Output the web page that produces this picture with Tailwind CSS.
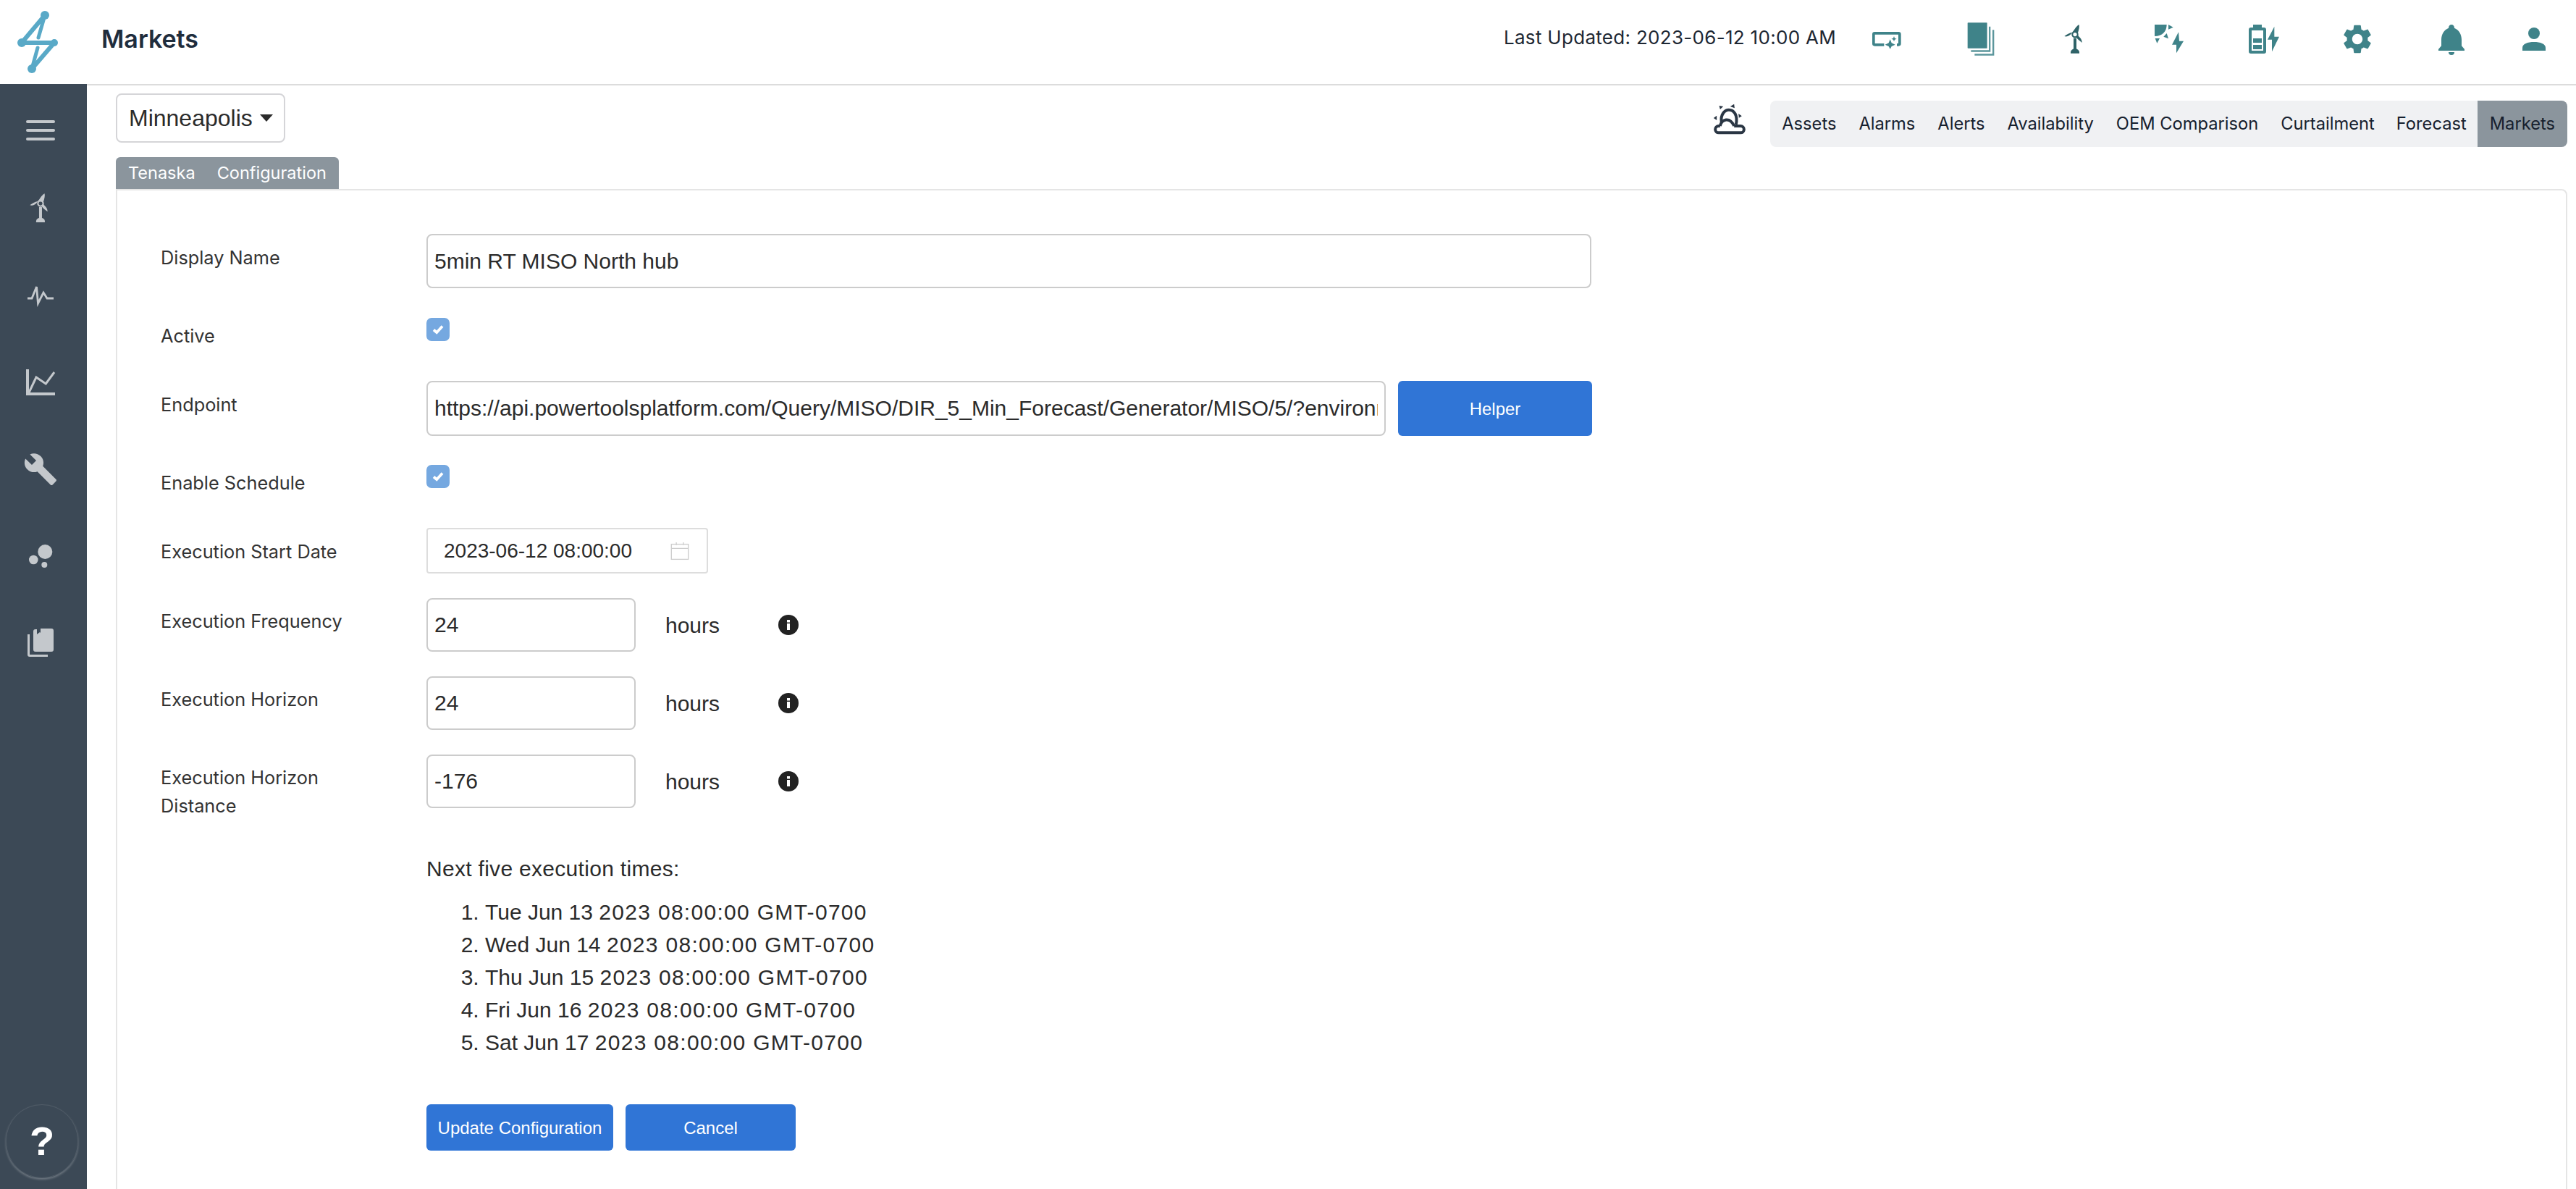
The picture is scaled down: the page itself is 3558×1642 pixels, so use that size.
<!DOCTYPE html>
<html lang="en">
<head>
  <meta charset="UTF-8">
  <title>Markets</title>
  <script src="https://cdn.jsdelivr.net/npm/@tailwindcss/browser@4"></script>
</head>
<body class="font-['Inter',sans-serif] bg-white">
<div class="w-[3558px] h-[1642px] overflow-hidden flex flex-col">

  <!-- top bar -->
  <header class="h-[118px] shrink-0 flex items-start">
    <div class="w-[120px] h-[116px] shrink-0">
      <svg width="120" height="116" viewBox="0 0 120 116" fill="none" stroke="#59a9c7" stroke-linecap="round" stroke-linejoin="round">
        <path d="M62 21 L30 59 H75 L44 95" stroke-width="6"/>
        <path d="M62 21 L53 52 M44 95 L52 66" stroke-width="5"/>
        <circle cx="62" cy="21" r="6" fill="#59a9c7" stroke="none"/>
        <circle cx="30" cy="59" r="6" fill="#59a9c7" stroke="none"/>
        <circle cx="75" cy="59" r="5" fill="#59a9c7" stroke="none"/>
        <circle cx="44" cy="95" r="6" fill="#59a9c7" stroke="none"/>
      </svg>
    </div>
    <div class="flex-1 h-[118px] border-b-2 border-[#dcdcdc] flex items-start">
      <h1 class="ml-[20px] mt-[30px] text-[34px] leading-[48px] font-semibold text-[#1f2d3d]">Markets</h1>
      <div class="ml-auto flex items-start">
        <span class="mt-[36px] mr-[5px] text-[26px] leading-[32px] tracking-[0.3px] text-[#1d2733]">Last Updated: 2023-06-12 10:00 AM</span>
        <svg width="130" height="116" viewBox="-57 -30 390 348" fill="#3f8389">
          <path d="M127 161 H88 a10 10 0 0 1-10-10 V112 a10 10 0 0 1 10-10 H187 a10 10 0 0 1 10 10 V151 a10 10 0 0 1-10 10 H180 V150 H186 V113 H89 V150 H127 Z"/>
          <path d="M152 133 l6 15 15 7-15 7-6 11-6-11-15-7 15-7z"/>
          <path d="M168 120 l3 8 8 3-8 3-3 8-3-8-8-3 8-3z"/>
        </svg>
        <svg width="130" height="116" viewBox="333 -30 390 348" fill="#3f8389">
          <rect x="473" y="64" width="81" height="106" rx="2"/>
          <path d="M561 80 h7 V185 H487 v-7 H561 Z" fill="#5c969c"/>
          <path d="M576 94 h7 V200 H502 v-7 H576 Z" fill="#5c969c"/>
        </svg>
        <svg width="130" height="116" viewBox="723 -30 390 348" fill="#2f6368">
          <path d="M906 104 C916 96 920 80 935 72 C937 84 934 92 930 106 Z"/>
          <path d="M906 106 C896 118 885 124 874 120 C884 112 895 106 906 104 Z"/>
          <path d="M930 116 C936 124 947 130 947 147 C938 140 928 132 922 124 Z"/>
          <path d="M918 99 a14 14 0 1 0 0.01 0 Z M918 105 a8 8 0 1 1-0.01 0 Z" fill-rule="evenodd"/>
          <rect x="912" y="128" width="12" height="50"/>
          <path d="M900 191 v-5 a18 14 0 0 1 36 0 v5 z"/>
        </svg>
        <svg width="130" height="116" viewBox="1113 -30 390 348" fill="#3f8389">
          <path d="M1248 72 H1298 C1298 100 1280 120 1248 120 Z"/>
          <path d="M1305 72 L1325 83 L1305 92 Z"/>
          <path d="M1250 129 H1269 L1258 149 Z"/>
          <path d="M1285 122 L1298 108 L1305 130 Z"/>
          <path d="M1347 103 L1320 155 H1338 V190 L1368 140 H1350 Z"/>
        </svg>
        <svg width="130" height="116" viewBox="9 -30 390 348" fill="#3f8389">
          <path d="M162 72 H198 V84 H207 a9 9 0 0 1 9 9 V183 a9 9 0 0 1-9 9 H153 a9 9 0 0 1-9-9 V93 a9 9 0 0 1 9-9 H162 Z M156 96 V180 H204 V96 Z" fill-rule="evenodd"/>
          <rect x="162" y="129" width="36" height="18"/>
          <rect x="162" y="156" width="36" height="18"/>
          <path d="M250 80 L222 134 H240 V184 L270 122 H250 Z"/>
        </svg>
        <svg width="130" height="116" viewBox="399 -30 390 348" fill="#3f8389">
          <path transform="translate(522 60) scale(6)" d="M19.14 12.94c.04-.3.06-.61.06-.94 0-.32-.02-.64-.07-.94l2.03-1.58c.18-.14.23-.41.12-.61l-1.92-3.32c-.12-.22-.37-.29-.59-.22l-2.39.96c-.5-.38-1.03-.7-1.62-.94l-.36-2.54c-.04-.24-.24-.41-.48-.41h-3.84c-.24 0-.43.17-.47.41l-.36 2.54c-.59.24-1.13.57-1.62.94l-2.39-.96c-.22-.08-.47 0-.59.22L2.74 8.87c-.12.21-.08.47.12.61l2.03 1.58c-.05.3-.09.63-.09.94s.02.64.07.94l-2.03 1.58c-.18.14-.23.41-.12.61l1.92 3.32c.12.22.37.29.59.22l2.39-.96c.5.38 1.03.7 1.62.94l.36 2.54c.05.24.24.41.48.41h3.84c.24 0 .44-.17.47-.41l.36-2.54c.59-.24 1.13-.56 1.62-.94l2.39.96c.22.08.47 0 .59-.22l1.92-3.32c.12-.22.07-.47-.12-.61l-2.01-1.58zM12 15.6c-1.98 0-3.6-1.62-3.6-3.6s1.62-3.6 3.6-3.6 3.6 1.62 3.6 3.6-1.62 3.6-3.6 3.6z"/>
        </svg>
        <svg width="130" height="116" viewBox="789 -30 390 348" fill="#3f8389">
          <path d="M972 86 a12 14 0 0 1 24 0 C1015 94 1026 112 1026 135 V160 L1038 174 V180 H930 V174 L942 160 V135 C942 112 953 94 972 86 Z"/>
          <path d="M972 186 H996 a12 12 0 0 1-24 0 Z"/>
        </svg>
        <svg width="107" height="116" viewBox="1179 -30 321 348" fill="#3f8389">
          <circle cx="1326" cy="108" r="24"/>
          <path d="M1278 180 V168 C1278 152 1300 144 1326 144 C1352 144 1374 152 1374 168 V180 Z"/>
        </svg>
      </div>
    </div>
  </header>

  <div class="flex-1 flex min-h-0 -mt-[2px]">
    <!-- side menu -->
    <aside class="w-[120px] shrink-0 bg-[#3c4956] flex flex-col">
      <svg width="120" height="112" viewBox="0 116 120 112" fill="#c4c8cc">
        <rect x="36" y="166" width="40" height="4" rx="2"/>
        <rect x="36" y="178" width="40" height="4" rx="2"/>
        <rect x="36" y="190" width="40" height="4" rx="2"/>
      </svg>
      <svg width="120" height="120" viewBox="0 228 120 120" fill="#c4c8cc">
        <g transform="translate(-250 243.3) scale(.3333)">
          <path d="M906 104 C916 96 920 80 935 72 C937 84 934 92 930 106 Z"/>
          <path d="M906 106 C896 118 885 124 874 120 C884 112 895 106 906 104 Z"/>
          <path d="M930 116 C936 124 947 130 947 147 C938 140 928 132 922 124 Z"/>
          <path d="M918 99 a14 14 0 1 0 0.01 0 Z M918 105 a8 8 0 1 1-0.01 0 Z" fill-rule="evenodd"/>
          <rect x="912" y="128" width="12" height="50"/>
          <path d="M900 191 v-5 a18 14 0 0 1 36 0 v5 z"/>
        </g>
      </svg>
      <svg width="120" height="120" viewBox="0 348 120 120" fill="none" stroke="#c4c8cc" stroke-width="2.8">
        <polyline points="38,412 44,412 50.5,396 52.5,419 60,404 65,412 74,412"/>
      </svg>
      <svg width="120" height="120" viewBox="0 468 120 120" fill="#c4c8cc">
        <path d="M36 510 h4 V542 H76 v4 H36 Z"/>
        <polyline points="40,542 50,521 63.3,530 75,514" fill="none" stroke="#c4c8cc" stroke-width="3"/>
      </svg>
      <svg width="120" height="120" viewBox="0 588 120 120" fill="#c4c8cc">
        <path transform="translate(32 624) scale(2)" d="M22.7 19l-9.1-9.1c.9-2.3.4-5-1.5-6.9-2-2-5-2.4-7.4-1.3L9 6 6 9 1.6 4.7C.4 7.1.9 10.1 2.9 12.1c1.9 1.9 4.6 2.4 6.9 1.5l9.1 9.1c.4.4 1 .4 1.4 0l2.3-2.3c.5-.4.5-1.1.1-1.4z"/>
      </svg>
      <svg width="120" height="120" viewBox="0 708 120 120" fill="#c4c8cc">
        <circle cx="62.3" cy="762" r="10"/>
        <circle cx="46.3" cy="773" r="6.3"/>
        <circle cx="61.3" cy="780" r="4"/>
      </svg>
      <svg width="120" height="120" viewBox="0 828 120 120" fill="#c4c8cc">
        <path d="M38 876 h3 V904 H66 v3 H41 a3 3 0 0 1-3-3 Z"/>
        <path d="M46 872 a3 3 0 0 1 3-3 h2 V876 l4-3 1 1 V868 H71 a3 3 0 0 1 3 3 V897 a3 3 0 0 1-3 3 H49 a3 3 0 0 1-3-3 Z"/>
      </svg>
      <div class="mt-auto mb-[15px] ml-[8px] w-[100px] h-[102px] rounded-full border border-white/10 shadow-[0_2px_3px_rgba(255,255,255,0.25)] flex items-center justify-center">
        <span class="font-['Liberation_Sans',sans-serif] font-bold text-[56px] leading-none text-white">?</span>
      </div>
    </aside>

    <main class="flex-1 min-w-0 pl-[40px] pr-[12px] flex flex-col">
      <div class="flex items-start pt-[13px]">
        <button class="w-[234px] h-[68px] border-2 border-[#d5d5d8] rounded-[8px] pl-[16px] flex items-center font-['Liberation_Sans',sans-serif] text-[32px] text-[#2b2b2b]">
          Minneapolis
          <svg class="ml-[10px]" width="18" height="10" viewBox="0 0 18 10" fill="#2b2b2b"><path d="M0 0 H18 L9 10 Z"/></svg>
        </button>
        <div class="ml-auto flex items-start mt-[10px]">
          <svg class="mr-[33px] mt-[3px]" width="47" height="45" viewBox="80 70 140 135" fill="#2a3644">
            <path d="M108 82 L125 85 L112 97 Z M154 85 L170 75 L172 92 Z M188 115 L202 125 L190 132 Z M85 133 L98 123 L98 142 Z"/>
            <g fill="none" stroke="#2a3644" stroke-width="12">
              <path d="M118 152 C112 118 132 99 148 99 C170 99 186 122 178 160"/>
              <path d="M112 166 C118 138 152 126 170 166"/>
              <path d="M112 166 H106 a14 14 0 0 0 0 28 H197 a14 14 0 0 0 0-28 H170"/>
            </g>
          </svg>
          <nav class="flex h-[64px] bg-[#f0f1f3] rounded-[8px] overflow-hidden text-[23.7px] text-[#16202e]">
            <a class="px-[16px] flex items-center">Assets</a>
            <a class="px-[15px] flex items-center">Alarms</a>
            <a class="px-[16px] flex items-center">Alerts</a>
            <a class="px-[15px] flex items-center">Availability</a>
            <a class="px-[16px] flex items-center">OEM Comparison</a>
            <a class="px-[15px] flex items-center">Curtailment</a>
            <a class="px-[15px] flex items-center">Forecast</a>
            <a class="px-[17px] flex items-center bg-[#8b959d]">Markets</a>
          </nav>
        </div>
      </div>

      <div class="mt-[14px] flex">
        <div class="h-[44px] w-[308px] bg-[#8b959d] rounded-t-[6px] pl-[17px] flex items-center gap-[30px] text-[23.5px] text-white">
          <span>Tenaska</span>
          <span>Configuration</span>
        </div>
      </div>

      <!-- config form -->
      <section class="flex-none h-[1500px] border-2 border-[#e5e5e5] rounded-tr-[8px] pl-[60px] pt-[60px] text-[25.3px] leading-[39px] text-[#333] font-normal">
        <div class="flex items-start">
          <label class="w-[367px] pt-[13px]">Display Name</label>
          <input class="w-[1609px] h-[75px] border-2 border-[#cccccc] rounded-[8px] px-[9px] font-['Liberation_Sans',sans-serif] text-[30px] text-[#2b2b2b]" value="5min RT MISO North hub">
        </div>
        <div class="flex items-start mt-[41px]">
          <label class="w-[367px] pt-[5px]">Active</label>
          <span class="w-[32px] h-[32px] rounded-[7px] bg-[#75a8e0] flex items-center justify-center">
            <svg width="16" height="14" viewBox="0 0 16 14" fill="none" stroke="#fff" stroke-width="3.8"><path d="M2 7.5 L6.2 11.2 L14 2.5"/></svg>
          </span>
        </div>
        <div class="flex items-start mt-[43px]">
          <label class="w-[367px] pt-[13px]">Endpoint</label>
          <input class="w-[1325px] h-[76px] border-2 border-[#cccccc] rounded-[8px] px-[9px] font-['Liberation_Sans',sans-serif] text-[30px] text-[#2b2b2b]" value="https://api.powertoolsplatform.com/Query/MISO/DIR_5_Min_Forecast/Generator/MISO/5/?environment=production">
          <button class="ml-[17px] w-[268px] h-[76px] rounded-[6px] bg-[#3075d6] text-white font-['Liberation_Sans',sans-serif] text-[24px]">Helper</button>
        </div>
        <div class="flex items-start mt-[40px]">
          <label class="w-[367px] pt-[5px]">Enable Schedule</label>
          <span class="w-[32px] h-[32px] rounded-[7px] bg-[#75a8e0] flex items-center justify-center">
            <svg width="16" height="14" viewBox="0 0 16 14" fill="none" stroke="#fff" stroke-width="3.8"><path d="M2 7.5 L6.2 11.2 L14 2.5"/></svg>
          </span>
        </div>
        <div class="flex items-start mt-[43px]">
          <label class="w-[367px] pt-[13px]">Execution Start Date</label>
          <div class="w-[389px] h-[63px] border-2 border-[#dddddd] rounded-[4px] pl-[22px] pr-[23px] flex items-center justify-between font-['Liberation_Sans',sans-serif] text-[28px] text-[#2b2b2b]">
            <span>2023-06-12 08:00:00</span>
            <svg width="28" height="28" viewBox="1070 80 86 86" fill="none" stroke="#cccccc" stroke-width="4">
              <rect x="1077" y="94" width="72" height="64"/>
              <path d="M1077 112 H1149 M1098 86 V98 M1128 86 V98"/>
            </svg>
          </div>
        </div>
        <div class="flex items-center mt-[34px] h-[74px]">
          <label class="w-[367px] self-start pt-[12px]">Execution Frequency</label>
          <input class="w-[289px] h-[74px] border-2 border-[#cccccc] rounded-[8px] px-[9px] font-['Liberation_Sans',sans-serif] text-[30px] text-[#2b2b2b]" value="24">
          <span class="ml-[41px] font-['Liberation_Sans',sans-serif] text-[30px] text-[#2b2b2b]">hours</span>
          <svg class="ml-[81px]" width="28" height="28" viewBox="0 0 28 28"><circle cx="14" cy="14" r="14" fill="#222"/><rect x="12" y="12" width="4" height="9" fill="#fff"/><rect x="12" y="7" width="4" height="3.5" fill="#fff"/></svg>
        </div>
        <div class="flex items-center mt-[34px] h-[74px]">
          <label class="w-[367px] self-start pt-[12px]">Execution Horizon</label>
          <input class="w-[289px] h-[74px] border-2 border-[#cccccc] rounded-[8px] px-[9px] font-['Liberation_Sans',sans-serif] text-[30px] text-[#2b2b2b]" value="24">
          <span class="ml-[41px] font-['Liberation_Sans',sans-serif] text-[30px] text-[#2b2b2b]">hours</span>
          <svg class="ml-[81px]" width="28" height="28" viewBox="0 0 28 28"><circle cx="14" cy="14" r="14" fill="#222"/><rect x="12" y="12" width="4" height="9" fill="#fff"/><rect x="12" y="7" width="4" height="3.5" fill="#fff"/></svg>
        </div>
        <div class="flex items-center mt-[34px] h-[74px]">
          <label class="w-[367px] self-start pt-[12px]">Execution Horizon<br>Distance</label>
          <input class="w-[289px] h-[74px] border-2 border-[#cccccc] rounded-[8px] px-[9px] font-['Liberation_Sans',sans-serif] text-[30px] text-[#2b2b2b]" value="-176">
          <span class="ml-[41px] font-['Liberation_Sans',sans-serif] text-[30px] text-[#2b2b2b]">hours</span>
          <svg class="ml-[81px]" width="28" height="28" viewBox="0 0 28 28"><circle cx="14" cy="14" r="14" fill="#222"/><rect x="12" y="12" width="4" height="9" fill="#fff"/><rect x="12" y="7" width="4" height="3.5" fill="#fff"/></svg>
        </div>
        <div class="ml-[367px] mt-[61px] font-['Liberation_Sans',sans-serif] text-[30px] leading-[45px] text-[#2b2b2b]">
          <p class="tracking-[0.3px]">Next five execution times:</p>
          <ol class="list-decimal pl-[81px] mt-[15px]">
            <li>Tue Jun 13 <span class="tracking-[1.3px]">2023 08:00:00 GMT-0700</span></li>
            <li>Wed Jun 14 <span class="tracking-[1.3px]">2023 08:00:00 GMT-0700</span></li>
            <li>Thu Jun 15 <span class="tracking-[1.3px]">2023 08:00:00 GMT-0700</span></li>
            <li>Fri Jun 16 <span class="tracking-[1.3px]">2023 08:00:00 GMT-0700</span></li>
            <li>Sat Jun 17 <span class="tracking-[1.3px]">2023 08:00:00 GMT-0700</span></li>
          </ol>
        </div>
        <div class="ml-[367px] mt-[63px] flex gap-[17px] font-['Liberation_Sans',sans-serif] text-[24px] text-white">
          <button class="w-[258px] h-[64px] rounded-[6px] bg-[#3075d6]">Update Configuration</button>
          <button class="w-[235px] h-[64px] rounded-[6px] bg-[#3075d6]">Cancel</button>
        </div>
      </section>
    </main>
  </div>
</div>
</body>
</html>
